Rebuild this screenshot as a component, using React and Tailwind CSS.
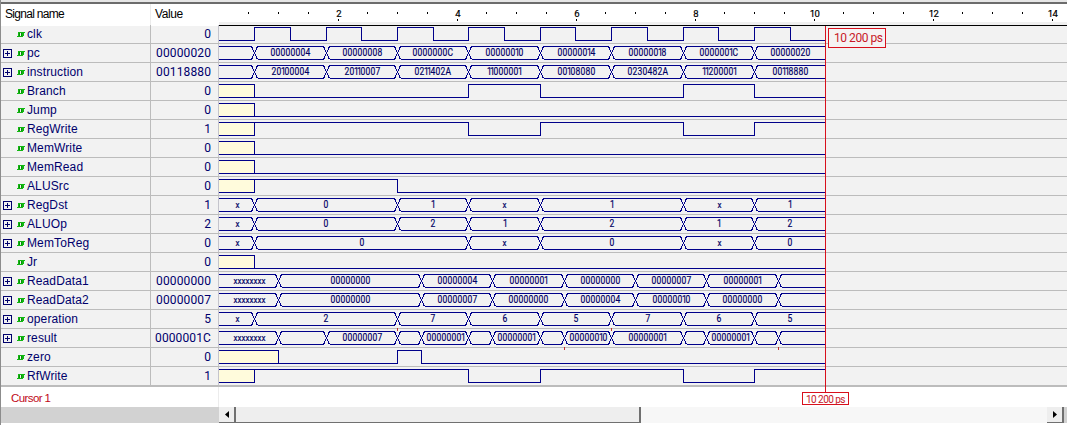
import React from 'react';

const END = 10.2;
const LEFT = 219;
// Column inside the waveform pane for a given time in nanoseconds.
const px = (t) => Math.round(218.45 + 59.5 * t) - LEFT;
const tickX = (t) => Math.floor(0.1 + 59.5 * t);

const words = (...list) => [0.6, 1.8, 3, 4.2, 5.4, 6.6, 7.8, 9].map((t, i) => [t, list[i]]);
const readData = (...list) => [1, 3.4, 4.6, 5.8, 7, 8.2, 9.4].map((t, i) => [t, list[i] || '']);
const regWrite = { unknown: 0.6, high: [[0.6, 4.2], [5.4, 7.8], [9, END]] };

const signals = [
  { name: 'clk', value: '0', bit: { unknown: 0, high: [0.6, 1.8, 3, 4.2, 5.4, 6.6, 7.8, 9].map((t) => [t, t + 0.6]) } },
  { name: 'pc', value: '00000020', bus: [[0, ''], ...words('00000004', '00000008', '0000000C', '00000010', '00000014', '00000018', '0000001C', '00000020')] },
  { name: 'instruction', value: '00118880', bus: [[0, ''], ...words('20100004', '20110007', '0211402A', '11000001', '00108080', '0230482A', '11200001', '00118880')] },
  { name: 'Branch', value: '0', bit: { unknown: 0.6, high: [[4.2, 5.4], [7.8, 9]] } },
  { name: 'Jump', value: '0', bit: { unknown: 0.6, high: [] } },
  { name: 'RegWrite', value: '1', bit: regWrite },
  { name: 'MemWrite', value: '0', bit: { unknown: 0.6, high: [] } },
  { name: 'MemRead', value: '0', bit: { unknown: 0.6, high: [] } },
  { name: 'ALUSrc', value: '0', bit: { unknown: 0.6, high: [[0.6, 3]] } },
  { name: 'RegDst', value: '1', bus: [[0, 'x'], [0.6, '0'], [3, '1'], [4.2, 'x'], [5.4, '1'], [7.8, 'x'], [9, '1']] },
  { name: 'ALUOp', value: '2', bus: [[0, 'x'], [0.6, '0'], [3, '2'], [4.2, '1'], [5.4, '2'], [7.8, '1'], [9, '2']] },
  { name: 'MemToReg', value: '0', bus: [[0, 'x'], [0.6, '0'], [4.2, 'x'], [5.4, '0'], [7.8, 'x'], [9, '0']] },
  { name: 'Jr', value: '0', bit: { unknown: 0.6, high: [] } },
  { name: 'ReadData1', value: '00000000', bus: [[0, 'xxxxxxxx'], ...readData('00000000', '00000004', '00000001', '00000000', '00000007', '00000001')] },
  { name: 'ReadData2', value: '00000007', bus: [[0, 'xxxxxxxx'], ...readData('00000000', '00000007', '00000000', '00000004', '00000010', '00000000')] },
  { name: 'operation', value: '5', bus: [[0, 'x'], [0.6, '2'], [3, '7'], [4.2, '6'], [5.4, '5'], [6.6, '7'], [7.8, '6'], [9, '5']] },
  {
    name: 'result',
    value: '0000001C',
    bus: [[0, 'xxxxxxxx'], [1, ''], [1.8, '00000007'], [3, ''], [3.4, '00000001'], [4.2, ''], [4.6, '00000001'], [5.4, ''], [5.8, '00000010'], [6.6, '00000001'], [7.8, ''], [8.2, '00000001'], [9, ''], [9.4, '']],
    glitches: [[3, -1], [6.6, -1], [5.8, 18], [9.4, 18]],
  },
  { name: 'zero', value: '0', bit: { unknown: 1, high: [[3, 3.4]] } },
  { name: 'RfWrite', value: '1', bit: regWrite },
];

const SQUEEZE = 0.85;
const advance = (c) => (c === '1' ? 3 : c === 'x' ? 4 : c === 'A' || c === 'C' ? 6 : 5);

function BusLabel({ text, center }) {
  const total = [...text].reduce((sum, c) => sum + advance(c), 0);
  let x = Math.round(center - total / 2) + 0.5;
  const xs = [...text].map((c) => {
    const at = c === '1' ? x - 0.5 : x;
    x += advance(c);
    return (at / SQUEEZE).toFixed(2);
  });
  return (
    <text
      className="font-['Roboto',sans-serif]"
      transform={`scale(${SQUEEZE} 1)`}
      x={xs.join(' ')}
      y="12"
      fill="#000064"
      stroke="#000064"
      strokeWidth="0.2"
      fontSize={text[0] === 'x' ? 9.5 : 10}
    >
      {text}
    </text>
  );
}

function BitWave({ unknown, high }) {
  const u = px(unknown) + 0.5;
  let level = 15.5;
  let d = unknown > 0 ? `M0 2.5H${u}V15.5H0M${u} 15.5` : 'M0 15.5';
  high.forEach(([a, b]) => {
    d += `H${px(a) + 0.5}V2.5H${px(b) + 0.5}`;
    if (b < END) d += 'V15.5';
    else level = 2.5;
  });
  if (level === 15.5) d += `H${px(END)}`;
  return (
    <>
      {unknown > 0 && <rect x="0" y="3" width={px(unknown)} height="12" fill="#fffbdc" />}
      <path d={d} fill="none" stroke="#00008a" shapeRendering="crispEdges" />
    </>
  );
}

function BusWave({ segments }) {
  let d = '';
  segments.forEach(([t], i) => {
    const last = i === segments.length - 1;
    const a = i === 0 ? 0 : px(t) + 3.5;
    const b = last ? px(END) : px(segments[i + 1][0]) - 2.5;
    d += `M${a} 2.5H${b}M${a} 15.5H${b}`;
    if (!last) d += `M${b} 2.5L${b + 6} 15.5M${b} 15.5L${b + 6} 2.5`;
  });
  return (
    <>
      <path d={d} fill="none" stroke="#00008a" shapeRendering="crispEdges" />
      {segments.map(([t, label], i) => {
        const start = i === 0 ? 1 : px(t);
        const end = i === segments.length - 1 ? px(END) : px(segments[i + 1][0]);
        return label ? <BusLabel key={t} text={label} center={(start + end) / 2} /> : null;
      })}
    </>
  );
}

function Row({ signal, last }) {
  return (
    <div className={last ? 'flex h-5 border-b-2 border-[#bcbcbc]' : 'flex h-[19px] border-b border-[#bcbcbc]'}>
      <div className="flex w-[149px] items-center pl-[2px] text-[12px] leading-[18px] tracking-[0.12px] text-[#00006c]">
        <svg className="mt-px h-[9px] w-[9px] shrink-0" viewBox="0 0 9 9" shapeRendering="crispEdges">
          {signal.bus && <path d="M0.5 0.5H8.5V8.5H0.5ZM2 4.5H7M4.5 2V7" fill="none" stroke="#00006c" />}
        </svg>
        <svg className="ml-[4px] mt-px h-[7px] w-[9px] shrink-0" viewBox="0 0 9 7" shapeRendering="crispEdges">
          <path d="M1 5H3V6H1ZM2 1H4V6H2ZM4 1H5V2H4ZM5 1H6V6H4V5H5ZM6 5H7V6H6ZM6 1H8V5H6ZM8 1H9V2H8Z" fill="#12b812" />
          <path d="M3 2H4V5H3ZM5 2H6V5H5Z" fill="#0a8a0a" />
        </svg>
        <span className="ml-[2px]">{signal.name}</span>
      </div>
      <div className="w-[68px] border-l border-[#bcbcbc] pr-[7px] text-right font-['Roboto',sans-serif] text-[12px] leading-[18px] tracking-[0.12px] text-[#00006c]">
        {signal.value}
      </div>
      <svg className="h-[18px] w-[849px] shrink-0 overflow-visible border-l border-[#c4c4cc]" viewBox="0 0 848 18">
        {signal.bit ? <BitWave {...signal.bit} /> : <BusWave segments={signal.bus} />}
        {(signal.glitches || []).map(([t, y]) => (
          <rect key={t} x={px(t)} y={y} width="1" height="3" fill="#c03030" />
        ))}
      </svg>
    </div>
  );
}

function Ruler() {
  const ticks = Array.from({ length: 28 }, (_, i) => (i + 1) / 2);
  return (
    <svg className="h-[22px] w-[848px] shrink-0" viewBox="0 0 848 22">
      <rect x="0" y="18" width="848" height="3" fill="#f0f0f0" />
      {ticks.map((t) =>
        t % 2 === 0 ? (
          <g key={t}>
            <text
              className="font-['Roboto',sans-serif]"
              x={tickX(t) + 0.5}
              y="13"
              textAnchor="middle"
              fontSize="9.5"
              letterSpacing="-0.6"
              stroke="#000"
              strokeWidth="0.2"
            >
              {t}
            </text>
            <rect x={tickX(t)} y="15" width="1" height="2" />
          </g>
        ) : (
          <rect key={t} x={tickX(t)} y="8" width="1" height="2" />
        )
      )}
      <rect x="0" y="21" width="848" height="1" />
    </svg>
  );
}

function ScrollButton({ d }) {
  return (
    <div className="flex h-4 w-[17px] items-center justify-center border-b border-r-2 border-[#707070] bg-[#eeeeee]">
      <svg className="h-[7px] w-[4px]" viewBox="0 0 4 7">
        <path d={d} />
      </svg>
    </div>
  );
}

export default function App() {
  return (
    <div className="relative flex h-[425px] w-[1067px] flex-col overflow-hidden border-l border-[#8c8c8c] bg-white font-['Liberation_Sans',Arial,sans-serif]">
      <div className="h-1 shrink-0 border-b-2 border-[#6c6c6c] bg-[#e6e6e6]" />
      <div className="flex h-[22px] shrink-0">
        <div className="h-[21px] w-[149px] pl-[4px] text-[12px] leading-5 tracking-[-0.7px]">Signal name</div>
        <div className="h-[21px] w-[69px] border-l border-[#ececec] pl-[4px] text-[12px] leading-5 tracking-[-0.4px]">Value</div>
        <Ruler />
      </div>
      <div className="-mt-px shrink-0">
        <div className="flex flex-col bg-[linear-gradient(#f2f2f2,#f2f2f2)] bg-no-repeat bg-[position:0_1px]">
          {signals.map((s, i) => (
            <Row key={s.name} signal={s} last={i === signals.length - 1} />
          ))}
        </div>
      </div>
      <div className="flex h-5 shrink-0">
        <div className="w-[217px] pl-[10px] text-[11.5px] leading-[22px] tracking-[-0.6px] text-[#c00818]">Cursor 1</div>
        <div className="flex-1 border-l border-[#ececec]" />
      </div>
      <div className="flex h-[18px] shrink-0">
        <div className="h-4 w-[218px] bg-[#d2d2d2]" />
        <ScrollButton d="M4 0V7L0 3.5Z" />
        <div className="h-4 w-[405px] border-b border-r-2 border-[#707070] bg-[#eeeeee]" />
        <div className="h-4 flex-1 bg-[#f7f7f7]" />
        <ScrollButton d="M0 0V7L4 3.5Z" />
        <div className="h-4 w-[3px] bg-[#d2d2d2]" />
      </div>
      <div className="h-px w-full bg-[#e8e8e8]" />

      <div className="absolute left-[824px] top-[26px] z-10 h-[366px] w-px bg-[#d8101c]" />
      <div className="absolute left-[827px] top-[28px] h-5 w-[58px] whitespace-nowrap border border-[#d8101c] bg-[#f5f3f3] pl-[5px] font-['Roboto',sans-serif] text-[12px] leading-[19px] tracking-[-0.45px] text-[#c81828]">
        10 200 ps
      </div>
      <div className="absolute left-[801px] top-[392px] h-[13px] w-[47px] whitespace-nowrap border border-[#d8101c] bg-white pl-[3px] font-['Roboto',sans-serif] text-[10px] leading-[13px] tracking-[-0.55px] text-[#c81828]">
        10 200 ps
      </div>
    </div>
  );
}
